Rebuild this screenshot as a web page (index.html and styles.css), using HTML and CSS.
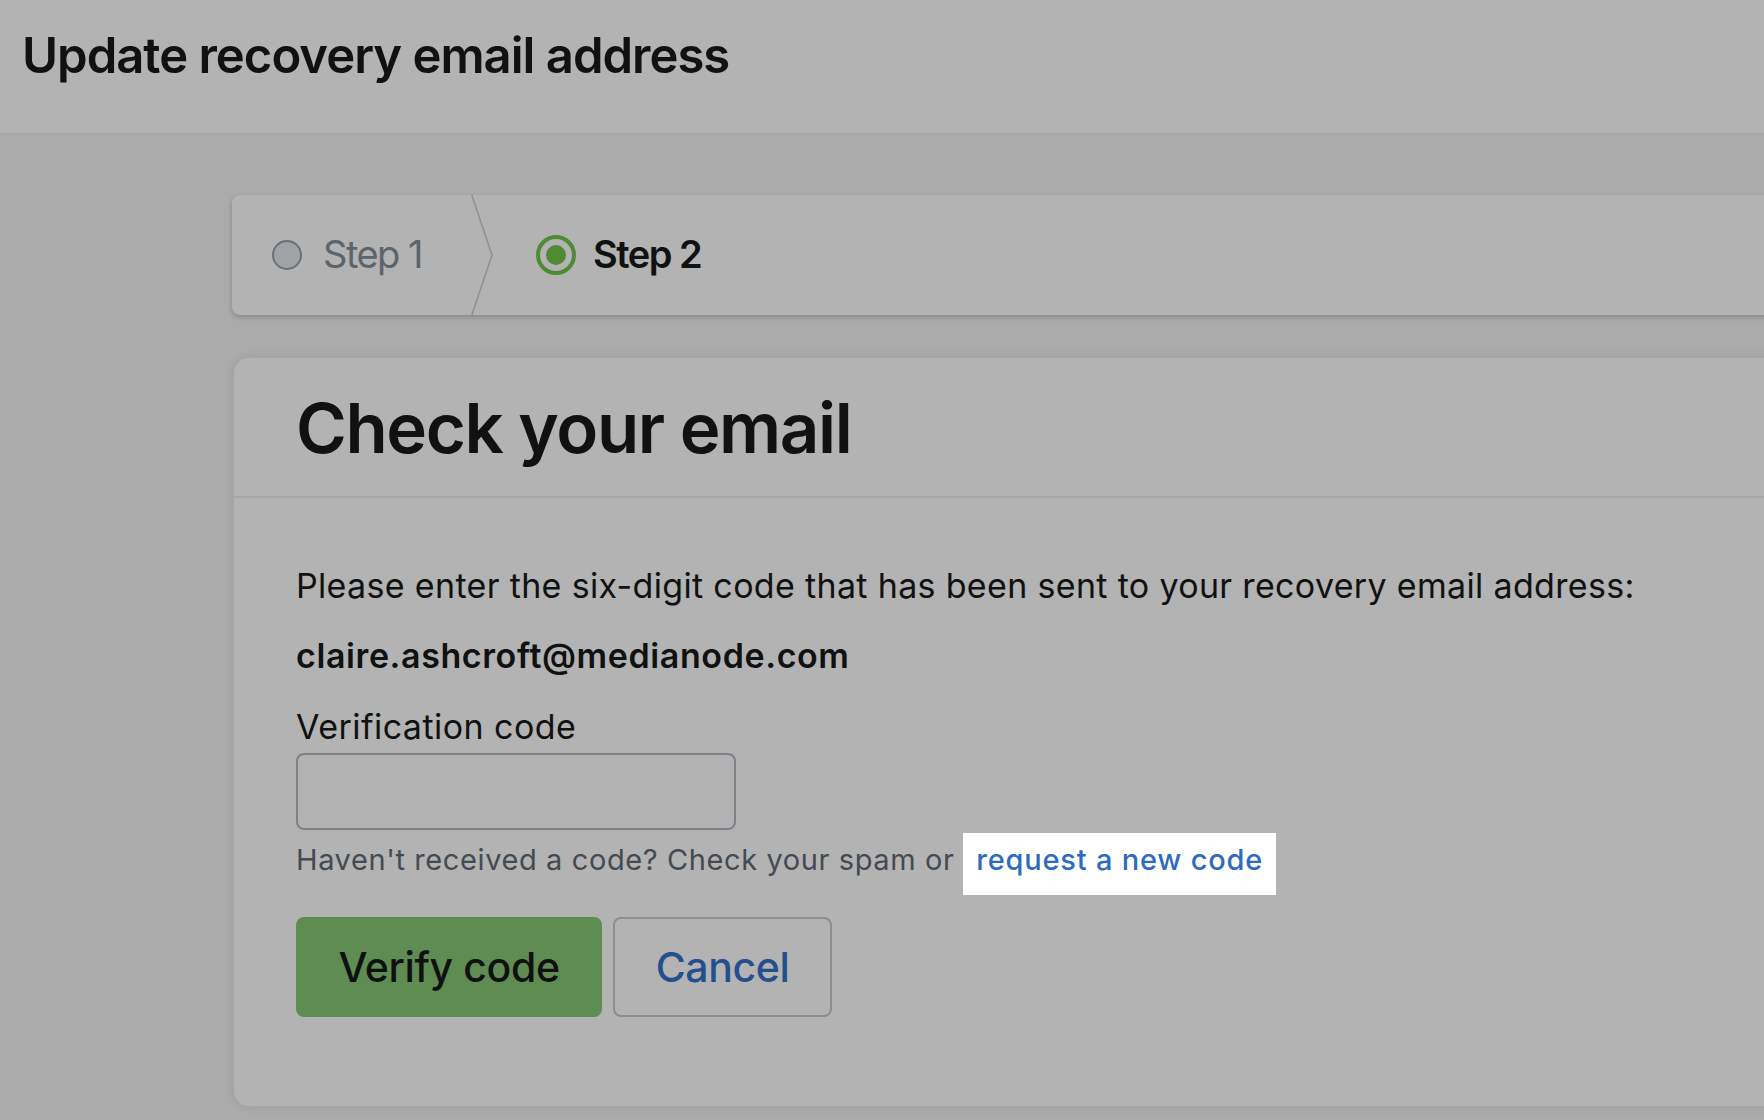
FILE: index.html
```html
<!DOCTYPE html>
<html lang="en">
<head>
<meta charset="utf-8">
<title>Update recovery email address</title>
<link rel="stylesheet" href="styles.css">
</head>
<body>
<header class="topbar">
  <h1 class="page-title">Update recovery email address</h1>
</header>
<main class="main">
  <nav class="stepper">
    <div class="step step-done">
      <span class="dot dot-idle"></span>
      <span class="step-label">Step 1</span>
    </div>
    <svg class="chevron" width="22" height="120" viewBox="0 0 22 120" aria-hidden="true">
      <polyline points="0.8,0 21,60 0.8,120" fill="none" stroke="#8d8f94" stroke-width="1.5"/>
    </svg>
    <div class="step step-current">
      <span class="dot dot-active"><span class="dot-core"></span></span>
      <span class="step-label">Step 2</span>
    </div>
  </nav>
  <section class="card">
    <div class="card-head">
      <h2 class="card-title">Check your email</h2>
    </div>
    <div class="card-body">
      <p class="intro">Please enter the six-digit code that has been sent to your recovery email address:</p>
      <p class="email">claire.ashcroft@medianode.com</p>
      <label class="field-label" for="code">Verification code</label>
      <input class="field-input" id="code" type="text">
      <p class="help">Haven't received a code? Check your spam or <a class="help-link" href="#">request a new code</a></p>
      <div class="actions">
        <button class="btn btn-primary" type="button">Verify code</button>
        <button class="btn btn-secondary" type="button">Cancel</button>
      </div>
    </div>
  </section>
</main>
</body>
</html>
```
FILE: styles.css
```css
* { box-sizing: border-box; }
html, body { margin: 0; padding: 0; }
body {
  background: #ababab;
  font-family: Inter, "Liberation Sans", sans-serif;
  color: #101111;
  width: 1764px;
  height: 1120px;
  overflow: hidden;
}
.topbar {
  background: #b3b3b3;
  border-bottom: 2px solid #a6a5ab;
  height: 135px;
  padding: 27px 0 0 22px;
}
.page-title {
  margin: 0;
  font-size: 49px;
  letter-spacing: -1px;
  line-height: 1.2;
  font-weight: 600;
}
.main {
  padding: 60px 0 0 232px;
}
.stepper {
  display: flex;
  align-items: center;
  height: 120px;
  margin-right: -40px;
  background: #b3b3b3;
  border-radius: 8px;
  box-shadow: 0 2px 5px rgba(0,0,0,0.22);
}
.step {
  display: flex;
  align-items: center;
  height: 100%;
}
.step-done { padding: 0 49px 0 40px; gap: 21px; }
.step-current { padding-left: 43px; gap: 17px; }
.chevron { display: block; flex: none; }
.step-label {
  font-size: 38px;
  letter-spacing: -1.5px;
  line-height: 1.2;
}
.step-done .step-label { color: #5c646c; }
.step-current .step-label { font-weight: 600; color: #101111; }
.dot {
  display: inline-flex;
  align-items: center;
  justify-content: center;
  border-radius: 50%;
  flex: none;
}
.dot-idle {
  width: 30px;
  height: 30px;
  background: #a1a2a6;
  border: 2px solid #687079;
}
.dot-active {
  width: 40px;
  height: 40px;
  border: 4px solid #4f8a35;
}
.dot-core {
  width: 20px;
  height: 20px;
  border-radius: 50%;
  background: #4f8a35;
}
.card {
  margin-top: 42px;
  margin-left: 1px;
  margin-right: -40px;
  height: 750px;
  background: #b3b3b3;
  border: 1px solid #a6a6a9;
  border-radius: 16px;
  box-shadow: 0 0 10px rgba(0,0,0,0.08);
}
.card-head {
  padding: 29px 0 26px 62px;
  border-bottom: 2px solid #a6a5ab;
}
.card-title {
  margin: 0;
  font-size: 69px;
  letter-spacing: -1.4px;
  line-height: 1.2;
  font-weight: 600;
}
.card-body {
  padding: 68px 0 0 62px;
  display: flex;
  flex-direction: column;
  align-items: flex-start;
}
.intro {
  margin: 0;
  font-size: 34px;
  letter-spacing: 0.33px;
  line-height: 1.2;
}
.email {
  margin: 29px 0 0;
  font-size: 34px;
  letter-spacing: 0.6px;
  line-height: 1.2;
  font-weight: 600;
}
.field-label {
  margin-top: 31px;
  font-size: 34px;
  letter-spacing: 0.45px;
  line-height: 1.2;
}
.field-input {
  margin-top: 5px;
  width: 440px;
  height: 77px;
  border: 2px solid #7d8086;
  border-radius: 8px;
  background: transparent;
  font: inherit;
}
.help {
  margin: 13px 0 0;
  font-size: 29px;
  letter-spacing: 0.6px;
  line-height: 1.2;
  color: #444a51;
}
.help-link {
  color: #2e6bbf;
  font-weight: 500;
  letter-spacing: 0.8px;
  text-decoration: none;
  background: #ffffff;
  padding: 9px 13px 18px;
}
.actions {
  display: flex;
  gap: 11px;
  margin-top: 39px;
}
.btn {
  height: 100px;
  border-radius: 8px;
  font-family: inherit;
  font-size: 41px;
  font-weight: 500;
  letter-spacing: -0.4px;
  padding: 0;
}
.btn-primary {
  width: 306px;
  background: #5f8c52;
  border: none;
  color: #0f1010;
}
.btn-secondary {
  width: 219px;
  background: transparent;
  border: 2px solid #8b8d92;
  color: #244e8d;
}
```
